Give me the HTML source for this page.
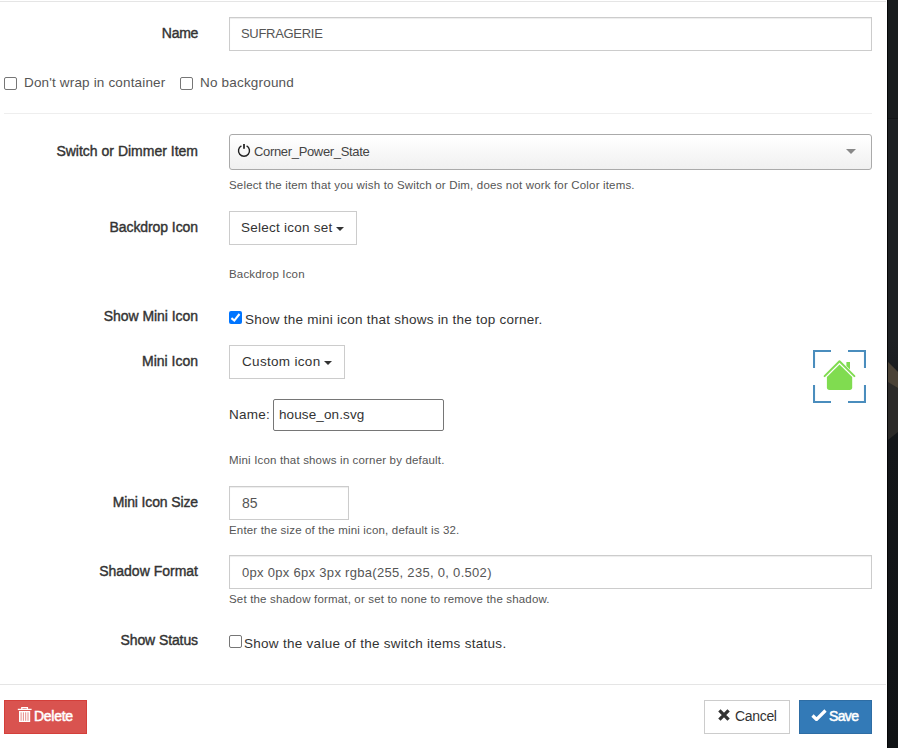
<!DOCTYPE html>
<html><head><meta charset="utf-8">
<style>
*{box-sizing:border-box}
html,body{margin:0;padding:0}
body{width:898px;height:748px;overflow:hidden;position:relative;background:#fff;font-family:"Liberation Sans",sans-serif;color:#333}
.a{position:absolute}
.t{position:absolute;white-space:nowrap;line-height:1}
.lbl{font-weight:400;-webkit-text-stroke:0.4px #333;color:#333;font-size:14px;text-align:right;right:700px;transform-origin:100% 50%}
.help{font-size:11.5px;letter-spacing:0.17px;color:#555}
.line{position:absolute;height:1px}
.box{position:absolute;border:1px solid #ccc;background:#fff}
.cb{position:absolute;width:13px;height:13px;border:1px solid #767676;border-radius:2px;background:#fff}
</style></head><body>
<!-- dark right strip -->
<div class="a" style="left:887px;top:0;width:11px;height:748px;background:linear-gradient(to bottom,#191c1e 0,#191c1e 118px,#131517 118px,#131517 119px,#1d2023 119px,#1d2023 340px,#131619 440px,#101315 748px)"></div>
<div class="a" style="left:887px;top:0;width:1px;height:748px;background:#050607"></div>
<svg class="a" style="left:888px;top:350px" width="10" height="100" viewBox="0 0 10 100"><polygon points="0,12 10,22 10,82 0,90" fill="#2b2a28"/><polygon points="0,12 10,22 10,38 0,32" fill="#4a4236"/></svg>

<div class="line" style="left:0;top:1px;width:886px;background:#e5e5e5"></div>
<div class="line" style="left:4px;top:113px;width:868px;background:#eee"></div>
<div class="line" style="left:0;top:684px;width:886px;background:#e5e5e5"></div>

<!-- Name -->
<div id="l1" class="t lbl" style="top:26px;letter-spacing:-0.3px">Name</div>
<div class="box" style="left:229px;top:17px;width:643px;height:34px;box-shadow:inset 0 1px 1px rgba(0,0,0,.075)"></div>
<div id="v1" class="t" style="left:241px;top:27px;font-size:13px;color:#555;letter-spacing:-0.3px">SUFRAGERIE</div>

<!-- checkboxes -->
<div class="cb" style="left:4px;top:77px"></div>
<div id="c1" class="t" style="left:24px;top:76px;font-size:13.5px;color:#555;letter-spacing:0.164px">Don't wrap in container</div>
<div class="cb" style="left:180px;top:77px"></div>
<div id="c2" class="t" style="left:200px;top:76px;font-size:13.5px;color:#555;letter-spacing:0.189px">No background</div>

<!-- Switch or Dimmer -->
<div id="l2" class="t lbl" style="top:144px">Switch or Dimmer Item</div>
<div class="a" style="left:229px;top:134px;width:643px;height:36px;border:1px solid #aaa;border-radius:3px;background:linear-gradient(#fff 5%,#f0f0f0 100%)"></div>
<svg class="a" style="left:237px;top:143px" width="14" height="15" viewBox="0 0 14 15"><path d="M4.4 2.9A5.5 5.5 0 1 0 9.6 2.9" fill="none" stroke="#222" stroke-width="1.4"/><path d="M7 1v4.7" stroke="#333" stroke-width="1.9"/></svg>
<div id="v2" class="t" style="left:254px;top:145px;font-size:13px;color:#444;letter-spacing:-0.333px">Corner_Power_State</div>
<div class="a" style="left:846px;top:149px;width:0;height:0;border-left:5px solid transparent;border-right:5px solid transparent;border-top:5px solid #888"></div>
<div id="h1" class="t help" style="left:229px;top:180px">Select the item that you wish to Switch or Dim, does not work for Color items.</div>

<!-- Backdrop Icon -->
<div id="l3" class="t lbl" style="top:220px;letter-spacing:-0.08px">Backdrop Icon</div>
<div class="box" style="left:229px;top:211px;width:128px;height:34px"></div>
<div id="b1" class="t" style="left:241px;top:221px;font-size:13.5px;color:#333;letter-spacing:0.250px">Select icon set</div>
<div class="a" style="left:336px;top:227px;width:0;height:0;border-left:4px solid transparent;border-right:4px solid transparent;border-top:4px solid #333"></div>
<div id="h2" class="t help" style="left:229px;top:269px">Backdrop Icon</div>

<!-- Show Mini Icon -->
<div id="l4" class="t lbl" style="top:309px;letter-spacing:-0.05px">Show Mini Icon</div>
<div class="a" style="left:229px;top:311px;width:13px;height:13px;border-radius:2px;background:#0075ff"></div>
<svg class="a" style="left:229px;top:311px" width="13" height="13" viewBox="0 0 13 13"><path d="M2.4 7.1L5.3 9.6L10.5 3" fill="none" stroke="#fff" stroke-width="2.1"/></svg>
<div id="c3" class="t" style="left:245px;top:313px;font-size:13.5px;color:#333;letter-spacing:0.243px">Show the mini icon that shows in the top corner.</div>

<!-- Mini Icon -->
<div id="l5" class="t lbl" style="top:354px">Mini Icon</div>
<div class="box" style="left:229px;top:345px;width:116px;height:34px"></div>
<div id="b2" class="t" style="left:242px;top:355px;font-size:13.5px;color:#333;letter-spacing:0.315px">Custom icon</div>
<div class="a" style="left:324px;top:361px;width:0;height:0;border-left:4px solid transparent;border-right:4px solid transparent;border-top:4px solid #333"></div>

<div id="n1" class="t" style="left:229px;top:408px;font-size:13.5px;color:#333;letter-spacing:0.249px">Name:</div>
<div class="a" style="left:273px;top:399px;width:171px;height:32px;border:1px solid #767676;border-radius:2px"></div>
<div id="n2" class="t" style="left:279px;top:408px;font-size:13.5px;color:#333;letter-spacing:0.114px">house_on.svg</div>
<div id="h3" class="t help" style="left:229px;top:455px">Mini Icon that shows in corner by default.</div>

<!-- preview icon -->
<svg class="a" style="left:813px;top:350px" width="53" height="53" viewBox="0 0 53 53">
<g fill="none" stroke="#4a8dbd" stroke-width="2.1">
<path d="M1 18V1h17"/><path d="M35 1h17v17"/><path d="M52 35v17H35"/><path d="M18 52H1V35"/>
</g>
<path d="M11.6 26.1L26.5 11.2L41.4 26.1" fill="none" stroke="#80dc50" stroke-width="2.0" stroke-linecap="round" stroke-linejoin="round"/>
<path d="M33.4 12h3.6v7.4l-3.6-3.5z" fill="#80dc50"/>
<path d="M13.9 26.9L26.5 14.6L39.2 26.9V37.3a2.6 2.6 0 0 1-2.6 2.6H16.5a2.6 2.6 0 0 1-2.6-2.6z" fill="#80dc50"/>
</svg>

<!-- Mini Icon Size -->
<div id="l6" class="t lbl" style="top:495px;letter-spacing:-0.13px">Mini Icon Size</div>
<div class="box" style="left:229px;top:486px;width:120px;height:34px;box-shadow:inset 0 1px 1px rgba(0,0,0,.075)"></div>
<div id="v3" class="t" style="left:242px;top:496px;font-size:14px;color:#555;letter-spacing:0.000px">85</div>
<div id="h4" class="t help" style="left:229px;top:525px">Enter the size of the mini icon, default is 32.</div>

<!-- Shadow -->
<div id="l7" class="t lbl" style="top:564px">Shadow Format</div>
<div class="box" style="left:229px;top:555px;width:643px;height:34px;box-shadow:inset 0 1px 1px rgba(0,0,0,.075)"></div>
<div id="v4" class="t" style="left:242px;top:566px;font-size:13px;color:#555;letter-spacing:0.3px">0px 0px 6px 3px rgba(255, 235, 0, 0.502)</div>
<div id="h5" class="t help" style="left:229px;top:594px">Set the shadow format, or set to none to remove the shadow.</div>

<!-- Show Status -->
<div id="l8" class="t lbl" style="top:633px;letter-spacing:-0.1px">Show Status</div>
<div class="cb" style="left:229px;top:635px"></div>
<div id="c4" class="t" style="left:244px;top:637px;font-size:13.5px;color:#333;letter-spacing:0.281px">Show the value of the switch items status.</div>

<!-- footer -->
<div class="a" style="left:4px;top:700px;width:83px;height:34px;background:#d9534f;border:1px solid #d43f3a"></div>
<svg class="a" style="left:17px;top:706px" width="15" height="17" viewBox="0 0 15 17"><path d="M0.8 3.4h13.8" stroke="#fff" stroke-width="1.3"/><path d="M4.8 3.3V1.6h5.6v1.7" fill="none" stroke="#fff" stroke-width="1.3"/><path d="M2 5h11.2v11H2z" fill="#fff"/><path d="M4.1 6.3v8.5M6.4 6.3v8.5M8.7 6.3v8.5M11 6.3v8.5" stroke="#d9534f" stroke-width="0.9" opacity="0.75"/></svg>
<div id="f1" class="t" style="left:34px;top:709px;font-size:14px;color:#fff;-webkit-text-stroke:0.5px #fff;letter-spacing:-0.270px">Delete</div>

<div class="a" style="left:704px;top:700px;width:86px;height:34px;background:#fff;border:1px solid #ccc"></div>
<svg class="a" style="left:718px;top:709px" width="12" height="12" viewBox="0 0 12 12"><path d="M1.4 1.4l9.2 9.2M10.6 1.4l-9.2 9.2" stroke="#333" stroke-width="3.3"/></svg>
<div id="f2" class="t" style="left:735px;top:709px;font-size:14px;color:#333;letter-spacing:-0.324px">Cancel</div>

<div class="a" style="left:799px;top:700px;width:73px;height:34px;background:#337ab7;border:1px solid #2e6da4"></div>
<svg class="a" style="left:811px;top:709px" width="16" height="12" viewBox="0 0 16 12"><path d="M1.5 6.5l4 4L14.5 1.5" fill="none" stroke="#fff" stroke-width="3.2"/></svg>
<div id="f3" class="t" style="left:829px;top:709px;font-size:14px;color:#fff;-webkit-text-stroke:0.5px #fff;letter-spacing:-0.660px">Save</div>
</body></html>
